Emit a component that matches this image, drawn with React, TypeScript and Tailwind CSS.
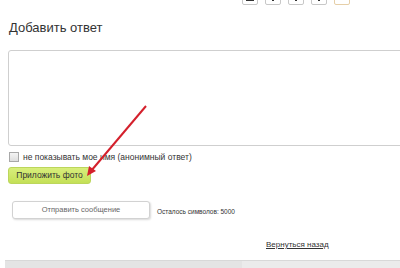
import React from 'react'

const ToolButton = ({ glyph, active }: { glyph: 'bar' | 'stem'; active?: boolean }) => (
  <div
    className={`relative -mt-[12px] h-[17px] w-[16px] rounded-[2px] border bg-white ${
      active ? 'border-[#e6cfa8]' : 'border-[#c8c8c8]'
    }`}
  >
    {glyph === 'bar' && !active && <div className="absolute bottom-[3px] left-[3px] h-[2px] w-[8px] bg-[#333]" />}
    {glyph === 'stem' && !active && <div className="absolute bottom-[3px] left-[6px] h-[5px] w-[2px] bg-[#333]" />}
  </div>
)

export default function App() {
  return (
    <div className="relative h-[268px] w-[400px] overflow-hidden bg-white font-['Liberation_Sans',Arial,sans-serif] text-[#333]">
      {/* editor toolbar, mostly scrolled out of view */}
      <div className="flex h-[6px] gap-[7px] overflow-hidden pl-[242px]">
        <ToolButton glyph="bar" />
        <ToolButton glyph="stem" />
        <ToolButton glyph="stem" />
        <ToolButton glyph="stem" />
        <ToolButton glyph="stem" active />
      </div>

      <h2 className="ml-[9px] mt-[14px] text-[13px] leading-[16px] font-normal text-[#333]">Добавить ответ</h2>

      <div className="ml-[8px] mt-[14px] h-[96px] w-[420px] rounded-[3px] border border-[#cfcfcf] bg-white" />

      <label className="ml-[9px] mt-[5px] flex items-center gap-[4px] text-[8.5px] leading-[12px]">
        <span className="h-[10px] w-[10px] border border-[#a8a8a8] bg-gradient-to-b from-[#f4f4f4] to-[#dedede]" />
        <span>не показывать мое имя (анонимный ответ)</span>
      </label>

      <button className="ml-[8px] mt-[4px] flex h-[17px] w-[83px] items-center justify-center rounded-[3px] border border-[#bcd65c] bg-gradient-to-b from-[#d8ee7c] to-[#c4e056] text-[8.5px] text-[#333]">
        Приложить фото
      </button>

      <div className="ml-[12px] mt-[17px] flex items-center gap-[7px]">
        <button className="flex h-[18px] w-[138px] items-center justify-center rounded-[3px] border border-[#d2d2d2] bg-white text-[7.5px] text-[#666] shadow-[1px_1px_2px_rgba(0,0,0,0.15)]">
          Отправить сообщение
        </button>
        <span className="mt-[3px] text-[6.5px] text-[#333]">Осталось символов: 5000</span>
      </div>

      <div className="ml-[266px] mt-[20px] text-[8px] leading-[11px]">
        <a className="text-[#333] underline">Вернуться назад</a>
      </div>

      <div className="ml-[5px] mt-[10px] flex h-[12px] border-t border-[#d8d8d8]">
        <div className="w-[237px] bg-[#e4e4e4]" />
        <div className="flex-1 bg-[#ebebeb]" />
      </div>

      {/* red annotation arrow */}
      <svg className="pointer-events-none absolute left-0 top-0" width="400" height="268">
        <line x1="146" y1="106" x2="91" y2="171" stroke="#d4202c" strokeWidth="2" />
        <polygon points="87,176 89,166 96,171" fill="#d4202c" />
      </svg>
    </div>
  )
}
